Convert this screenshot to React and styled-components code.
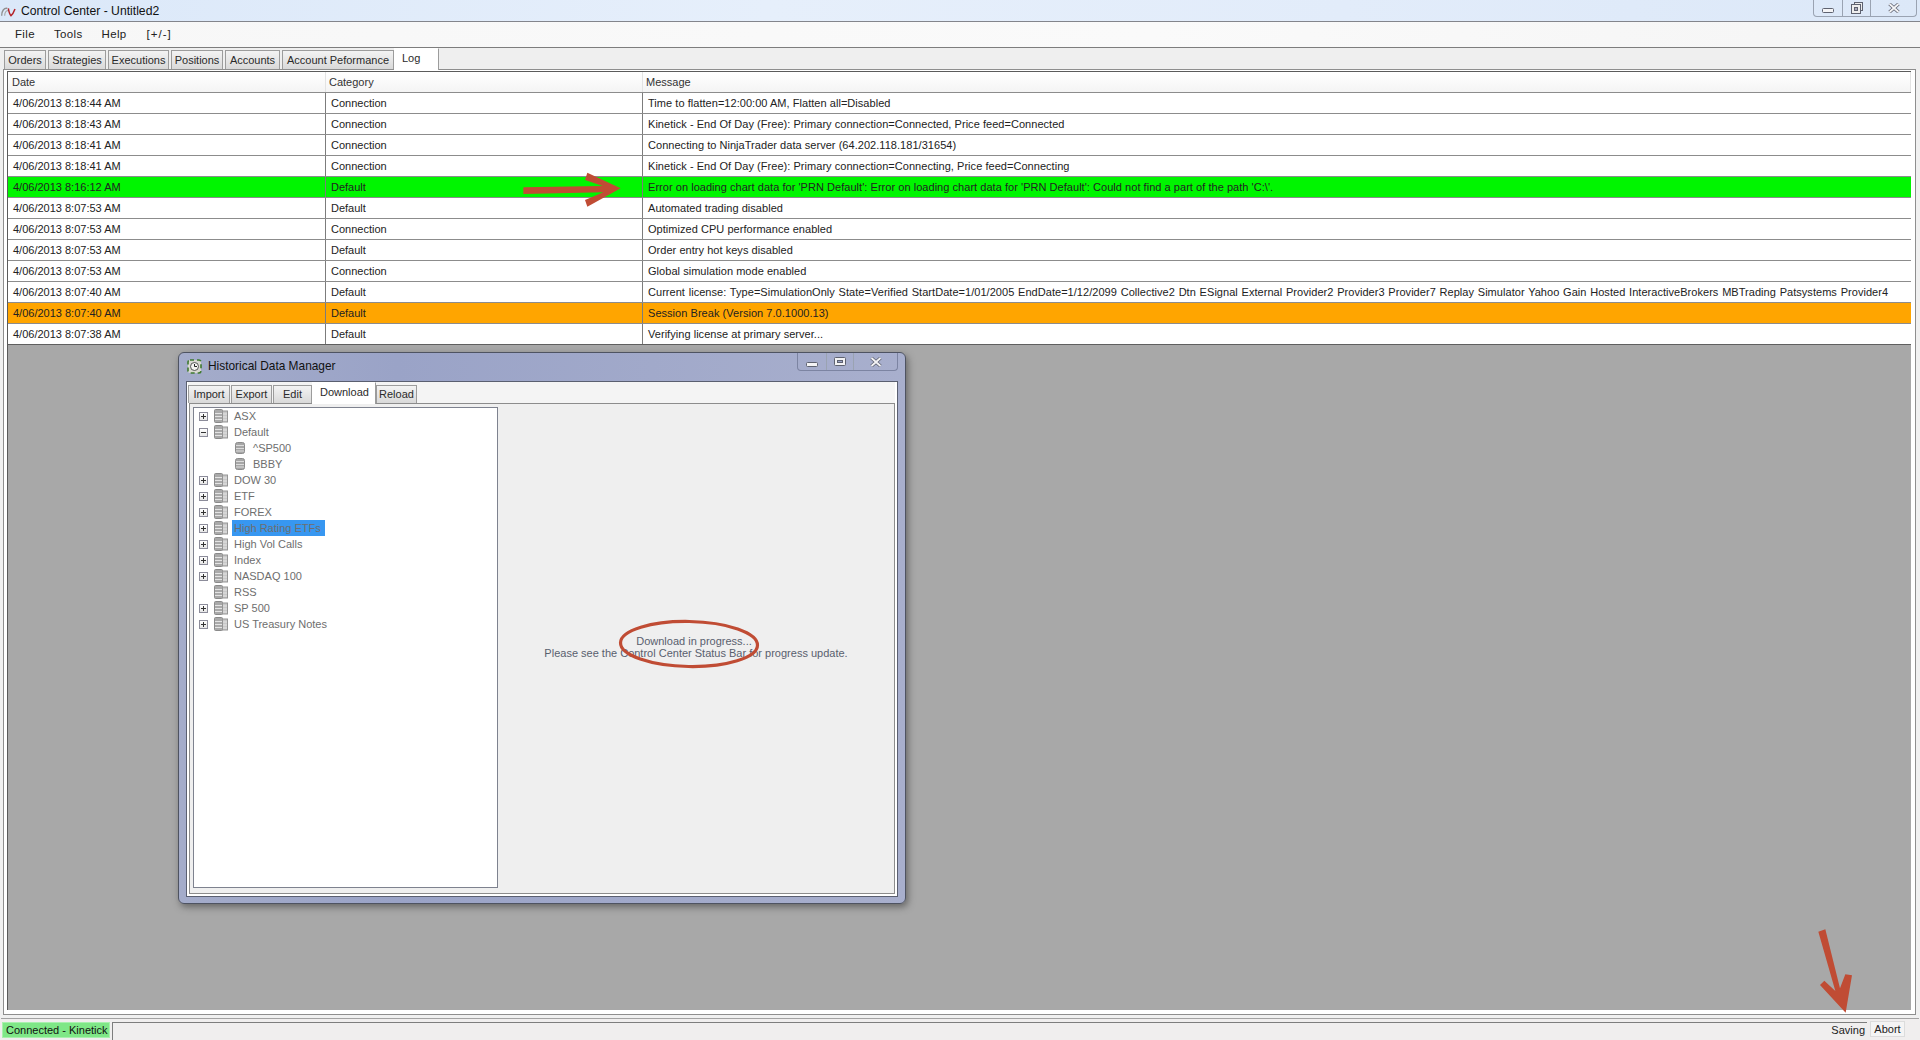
import React from "react";
import styled, { createGlobalStyle } from "styled-components";

const Global = createGlobalStyle`
  html, body { margin: 0; padding: 0; height: 100%; overflow: hidden; }
  #root { height: 100%; }
  * { box-sizing: border-box; }
  body { font-family: "Liberation Sans", Arial, sans-serif; font-size: 11px; color: #222; }
`;

const Page = styled.div`
  position: relative;
  width: 1920px;
  height: 1040px;
  display: flex;
  flex-direction: column;
  background: #f0f0f0;
  overflow: hidden;
`;

const TitleBar = styled.div`
  height: 22px;
  flex: none;
  display: flex;
  align-items: flex-start;
  background: linear-gradient(90deg, #dbe8f9 0%, #e6effb 40%, #e2ecfa 70%, #dce8f8 100%);
  border-bottom: 1px solid #83858c;
`;
const TitleIcon = styled.svg`
  width: 16px;
  height: 16px;
  margin: 1px 5px 0 0;
  flex: none;
`;
const TitleText = styled.span`
  font-size: 12.2px;
  line-height: 22px;
  color: #111;
  flex: 1;
`;
const Controls = styled.div`
  display: flex;
  height: 17px;
  margin-right: 3px;
  border: 1px solid #9aa3b2;
  border-top: none;
  border-radius: 0 0 4px 4px;
`;
const ControlBtn = styled.div`
  width: ${(p) => p.$w}px;
  display: flex;
  align-items: center;
  justify-content: center;
  padding-top: ${(p) => (p.$low ? 5 : 0)}px;
  border-left: ${(p) => (p.$first ? "none" : "1px solid #9aa3b2")};
`;

const MenuBar = styled.div`
  height: 26px;
  flex: none;
  display: flex;
  align-items: center;
  padding: 0 0 2px 15px;
  gap: 19px;
  background: linear-gradient(90deg, #f7f7f7, #fafafa 60%, #f5f5f5);
  font-size: 11.5px;
  color: #222;
  border-bottom: 1px solid #7d7d7d;
`;
const MenuItem = styled.span`
  letter-spacing: 0.35px;
`;
const MenuToggle = styled(MenuItem)`
  margin-left: 1px;
  letter-spacing: 1px;
`;

const TabStrip = styled.div`
  height: 21px;
  flex: none;
  display: flex;
  align-items: flex-end;
  padding-left: 4px;
  gap: 2px;
  background: #efefef;
`;
const Tab = styled.div`
  width: ${(p) => p.$w}px;
  height: ${(p) => (p.$active ? 22 : 19)}px;
  margin-bottom: ${(p) => (p.$active ? -1 : 0)}px;
  margin-left: ${(p) => (p.$overlap ? -p.$overlap : 0)}px;
  position: relative;
  z-index: ${(p) => (p.$active ? 2 : 0)};
  text-align: ${(p) => (p.$active ? "left" : "center")};
  padding-left: ${(p) => (p.$active ? 7 : 0)}px;
  line-height: ${(p) => (p.$active ? 19 : 18)}px;
  color: #2a2a2a;
  background: ${(p) => (p.$active ? "#fff" : "linear-gradient(#f3f3f3, #d9d9d9)")};
  border: 1px solid #9c9c9c;
  border-bottom: none;
  border-left-color: ${(p) => (p.$active ? "#fff" : "#9c9c9c")};
  border-top-color: ${(p) => (p.$active ? "#fff" : "#9c9c9c")};
`;

const PageFrame = styled.div`
  flex: 1;
  min-height: 0;
  display: flex;
  margin: 0 4px 0 3px;
  padding: 1px 4px 4px 3px;
  background: #fff;
  border: 1px solid #8e8e8e;
`;
const ContentInner = styled.div`
  flex: 1;
  display: flex;
  flex-direction: column;
  border-top: 1px solid #5a5a5a;
  border-left: 1px solid #5a5a5a;
  background: #a8a8a8;
`;

const Table = styled.div`
  display: flex;
  flex-direction: column;
  background: #fff;
  flex: none;
  border-bottom: 1px solid #5f5f5f;
`;
const HeadRow = styled.div`
  display: grid;
  grid-template-columns: 318px 317px 1fr;
  height: 20px;
  background: linear-gradient(#ffffff, #f4f4f4);
`;
const HeadCell = styled.div`
  padding-left: ${(p) => p.$pad}px;
  line-height: 20px;
  color: #333;
  border-right: 1px solid #e3e3e3;
`;
const Row = styled.div`
  display: grid;
  grid-template-columns: 318px 317px 1fr;
  height: 21px;
  border-top: 1px solid #8c8c8c;
  background: ${(p) => p.$bg || "#fff"};
`;
const Cell = styled.div`
  padding-left: ${(p) => p.$pad}px;
  line-height: 20px;
  color: #222;
  white-space: nowrap;
  overflow: hidden;
  border-right: ${(p) => (p.$last ? "none" : "1px solid #7c7c7c")};
`;
const MessageCell = styled(Cell)`
  letter-spacing: 0.04px;
  word-spacing: ${(p) => (p.$wide ? 0.65 : 0)}px;
`;
const Desk = styled.div`
  flex: 1;
  background: #a8a8a8;
`;

const OuterRule = styled.div`
  height: 4px;
  flex: none;
  margin: 0 1px;
  border-bottom: 1px solid #a2a2a2;
`;
const StatusBar = styled.div`
  height: 21px;
  flex: none;
  display: flex;
  align-items: flex-start;
  padding: 3px 0 0 2px;
  background: #f0eeee;
`;
const StatusGreen = styled.div`
  width: 108px;
  height: 16px;
  flex: none;
  padding-left: 3px;
  line-height: 14px;
  white-space: nowrap;
  background: #7fe787;
  border: 1px solid #a9f0ae;
  color: #111;
`;
const StatusTrack = styled.div`
  flex: 1;
  height: 18px;
  margin-left: 2px;
  display: flex;
  justify-content: flex-end;
  border-top: 1px solid #7d7d7d;
  border-left: 1px solid #7d7d7d;
  line-height: 15px;
  padding-right: 2px;
  color: #222;
`;
const AbortBtn = styled.div`
  width: 35px;
  height: 16px;
  flex: none;
  margin: -1px 15px 0 3px;
  text-align: center;
  line-height: 15px;
  border: 1px solid #dcdcdc;
  background: #f4f4f4;
  color: #222;
`;

const Dialog = styled.div`
  position: absolute;
  left: 178px;
  top: 352px;
  width: 728px;
  height: 552px;
  display: flex;
  flex-direction: column;
  padding: 0 7px 6px 7px;
  border-radius: 6px;
  border: 1px solid #4e5361;
  background: linear-gradient(90deg, #a4acca, #9aa3c7 30%, #a8afcd 100%);
  box-shadow: 2px 3px 7px rgba(50, 50, 50, 0.55);
`;
const DialogTitle = styled.div`
  height: 28px;
  flex: none;
  display: flex;
  align-items: flex-start;
`;
const DialogIcon = styled.svg`
  width: 15px;
  height: 15px;
  margin: 6px 6px 0 1px;
  flex: none;
`;
const DialogName = styled.span`
  flex: 1;
  font-size: 11.9px;
  line-height: 27px;
  color: #111;
`;
const DialogControls = styled.div`
  display: flex;
  height: 18px;
  border: 1px solid #7c84a2;
  border-top: none;
  border-radius: 0 0 4px 4px;
`;
const DialogBody = styled.div`
  flex: 1;
  min-height: 0;
  display: flex;
  flex-direction: column;
  background: #fff;
  border: 1px solid #5a5f70;
  padding: 0 2px 2px 2px;
`;
const DialogTabs = styled.div`
  height: 21px;
  flex: none;
  display: flex;
  align-items: flex-end;
  gap: 1px;
  margin-left: -1px;
  background: #f4f4f4;
`;
const DialogTab = styled(Tab)`
  height: ${(p) => (p.$active ? 22 : 18)}px;
  line-height: ${(p) => (p.$active ? 18 : 16)}px;
`;
const DialogMain = styled.div`
  flex: 1;
  min-height: 0;
  display: flex;
  background: #efefef;
  padding: 3px 0 5px 3px;
  border: 1px solid #8c8c8c;
`;
const Tree = styled.div`
  width: 305px;
  flex: none;
  background: #fff;
  border: 1px solid #7e828f;
`;
const TreeRow = styled.div`
  display: flex;
  align-items: center;
  height: 16px;
  padding-left: ${(p) => (p.$child ? 41 : 5)}px;
`;
const Expander = styled.div`
  width: 9px;
  height: 9px;
  flex: none;
  margin-right: 6px;
  border: 1px solid #8c8c9a;
  background: linear-gradient(#fff, #e6e6e6);
  position: relative;
  visibility: ${(p) => (p.$none ? "hidden" : "visible")};
  &::before {
    content: "";
    position: absolute;
    left: 1px;
    right: 1px;
    top: 3px;
    height: 1px;
    background: #333;
  }
  &::after {
    content: "";
    display: ${(p) => (p.$open ? "none" : "block")};
    position: absolute;
    top: 1px;
    bottom: 1px;
    left: 3px;
    width: 1px;
    background: #333;
  }
`;
const TreeLabel = styled.span`
  margin-left: 4px;
  padding: 0 3px 0 2px;
  line-height: 16px;
  color: #6e6e6e;
  background: ${(p) => (p.$sel ? "#3797f1" : "transparent")};
  width: ${(p) => (p.$sel ? "93px" : "auto")};
  white-space: nowrap;
`;
const ChildLabel = styled(TreeLabel)`
  margin-left: 6px;
`;
const DialogPanel = styled.div`
  flex: 1;
  display: flex;
  flex-direction: column;
  align-items: center;
  justify-content: center;
  padding-bottom: 1px;
  line-height: 12px;
  color: #59606e;
  text-align: center;
`;
const PanelLine = styled.div`
  transform: translateX(${(p) => p.$dx}px);
`;

const Annotation = styled.svg`
  position: absolute;
  left: ${(p) => p.$x}px;
  top: ${(p) => p.$y}px;
  width: ${(p) => p.$w}px;
  height: ${(p) => p.$h}px;
  pointer-events: none;
`;

const RED = "#c04c34";

const Logo = () => (
  <TitleIcon viewBox="0 0 48 48">
    <path d="M5 44 C5 30 12 20 22 22" fill="none" stroke="#8f8f8f" strokeWidth="4" />
    <path d="M14 44 C14 36 18 28 24 29" fill="none" stroke="#a8a8a8" strokeWidth="3.5" />
    <path d="M25 22 C27 34 30 41 33 44 C38 40 42 32 45 24" fill="none" stroke="#b4232a" strokeWidth="4.5" />
  </TitleIcon>
);

const MinGlyph = () => (
  <svg width="12" height="5" viewBox="0 0 12 5">
    <rect x="0.5" y="0.5" width="11" height="4" rx="1" fill="#f4f4f6" stroke="#5e6270" />
  </svg>
);
const RestoreGlyph = () => (
  <svg width="12" height="12" viewBox="0 0 12 12">
    <rect x="3.5" y="0.5" width="8" height="8" fill="#eee" stroke="#5e6270" />
    <rect x="0.5" y="2.5" width="9" height="9" fill="#eee" stroke="#5e6270" />
    <rect x="3.5" y="5.5" width="3" height="3" fill="#aab" stroke="#5e6270" />
  </svg>
);
const MaxGlyph = () => (
  <svg width="12" height="9" viewBox="0 0 12 9">
    <rect x="0.5" y="0.5" width="11" height="8" rx="1" fill="#f2f2f4" stroke="#5e6270" />
    <rect x="3.5" y="3.5" width="5" height="2" fill="#9aa3c7" stroke="#5e6270" />
  </svg>
);
const CloseGlyph = () => (
  <svg width="12" height="10" viewBox="0 0 12 10">
    <path d="M1.5 1 L10.5 9 M10.5 1 L1.5 9" stroke="#5e6270" strokeWidth="3.4" />
    <path d="M1.5 1 L10.5 9 M10.5 1 L1.5 9" stroke="#f4f4f6" strokeWidth="1.8" />
  </svg>
);

const DbIcon = () => (
  <svg width="14" height="14" viewBox="0 0 14 14" style={{ flex: "none" }}>
    <rect x="0.5" y="0.5" width="8" height="13" rx="1" fill="#a9a9a9" stroke="#8a8a8a" />
    <rect x="8.5" y="2" width="5" height="11" fill="#c8c8c8" stroke="#959595" />
    <path d="M1 4.5H8M1 7.5H8M1 10.5H8M9 5H13M9 8H13M9 11H13" stroke="#e4e4e4" strokeWidth="1" />
  </svg>
);
const CylIcon = () => (
  <svg width="10" height="12" viewBox="0 0 10 12" style={{ flex: "none" }}>
    <rect x="0.5" y="0.5" width="9" height="11" rx="2" fill="#a6a6a6" stroke="#8c8c8c" />
    <path d="M1 3.5H9M1 6.5H9M1 9H9" stroke="#dcdcdc" strokeWidth="1" />
  </svg>
);

const rows = [
  ["4/06/2013 8:18:44 AM", "Connection", "Time to flatten=12:00:00 AM, Flatten all=Disabled"],
  ["4/06/2013 8:18:43 AM", "Connection", "Kinetick - End Of Day (Free): Primary connection=Connected, Price feed=Connected"],
  ["4/06/2013 8:18:41 AM", "Connection", "Connecting to NinjaTrader data server (64.202.118.181/31654)"],
  ["4/06/2013 8:18:41 AM", "Connection", "Kinetick - End Of Day (Free): Primary connection=Connecting, Price feed=Connecting"],
  ["4/06/2013 8:16:12 AM", "Default", "Error on loading chart data for 'PRN Default': Error on loading chart data for 'PRN Default': Could not find a part of the path 'C:\\'.", "#00f500"],
  ["4/06/2013 8:07:53 AM", "Default", "Automated trading disabled"],
  ["4/06/2013 8:07:53 AM", "Connection", "Optimized CPU performance enabled"],
  ["4/06/2013 8:07:53 AM", "Default", "Order entry hot keys disabled"],
  ["4/06/2013 8:07:53 AM", "Connection", "Global simulation mode enabled"],
  ["4/06/2013 8:07:40 AM", "Default", "Current license: Type=SimulationOnly State=Verified StartDate=1/01/2005 EndDate=1/12/2099 Collective2 Dtn ESignal External Provider2 Provider3 Provider7 Replay Simulator Yahoo Gain Hosted InteractiveBrokers MBTrading Patsystems Provider4"],
  ["4/06/2013 8:07:40 AM", "Default", "Session Break (Version 7.0.1000.13)", "#ffa500"],
  ["4/06/2013 8:07:38 AM", "Default", "Verifying license at primary server..."],
];

const tabs = [
  ["Orders", 42], ["Strategies", 58], ["Executions", 61], ["Positions", 52],
  ["Accounts", 55], ["Account Peformance", 112],
];
const dlgTabs = [["Import", 42], ["Export", 41], ["Edit", 39]];

const tree = [
  { t: "ASX" },
  { t: "Default", open: true },
  { t: "^SP500", child: true },
  { t: "BBBY", child: true },
  { t: "DOW 30" },
  { t: "ETF" },
  { t: "FOREX" },
  { t: "High Rating ETFs", sel: true },
  { t: "High Vol Calls" },
  { t: "Index" },
  { t: "NASDAQ 100" },
  { t: "RSS", none: true },
  { t: "SP 500" },
  { t: "US Treasury Notes" },
];

export default function App() {
  return (
    <Page>
      <Global />
      <TitleBar>
        <Logo />
        <TitleText>Control Center - Untitled2</TitleText>
        <Controls>
          <ControlBtn $w={28} $first $low><MinGlyph /></ControlBtn>
          <ControlBtn $w={28}><RestoreGlyph /></ControlBtn>
          <ControlBtn $w={46}><CloseGlyph /></ControlBtn>
        </Controls>
      </TitleBar>
      <MenuBar>
        <MenuItem>File</MenuItem>
        <MenuItem>Tools</MenuItem>
        <MenuItem>Help</MenuItem>
        <MenuToggle>[+/-]</MenuToggle>
      </MenuBar>
      <TabStrip>
        {tabs.map(([t, w]) => <Tab key={t} $w={w}>{t}</Tab>)}
        <Tab $w={45} $active $overlap={2}>Log</Tab>
      </TabStrip>
      <PageFrame>
        <ContentInner>
          <Table>
            <HeadRow>
              <HeadCell $pad={4}>Date</HeadCell>
              <HeadCell $pad={3}>Category</HeadCell>
              <HeadCell $pad={3}>Message</HeadCell>
            </HeadRow>
            {rows.map(([d, c, m, bg], i) => (
              <Row key={i} $bg={bg}>
                <Cell $pad={5}>{d}</Cell>
                <Cell $pad={5}>{c}</Cell>
                <MessageCell $pad={5} $last $wide={m.length > 200}>{m}</MessageCell>
              </Row>
            ))}
          </Table>
          <Desk />
        </ContentInner>
      </PageFrame>
      <OuterRule />
      <StatusBar>
        <StatusGreen>Connected - Kinetick</StatusGreen>
        <StatusTrack>Saving</StatusTrack>
        <AbortBtn>Abort</AbortBtn>
      </StatusBar>

      <Dialog>
        <DialogTitle>
          <DialogIcon viewBox="0 0 15 15">
            <rect x="1" y="1" width="13" height="13" rx="2" fill="#d8d8d0" stroke="#3f7a2f" strokeWidth="1.6" strokeDasharray="4 3" />
            <circle cx="7.5" cy="7.5" r="4" fill="#f4f4f0" stroke="#555" />
            <path d="M7.5 5V7.5H10" stroke="#222" fill="none" />
          </DialogIcon>
          <DialogName>Historical Data Manager</DialogName>
          <DialogControls>
            <ControlBtn $w={28} $first $low><MinGlyph /></ControlBtn>
            <ControlBtn $w={27}><MaxGlyph /></ControlBtn>
            <ControlBtn $w={44}><CloseGlyph /></ControlBtn>
          </DialogControls>
        </DialogTitle>
        <DialogBody>
          <DialogTabs>
            {dlgTabs.map(([t, w]) => <DialogTab key={t} $w={w}>{t}</DialogTab>)}
            <DialogTab $w={64} $active $overlap={1}>Download</DialogTab>
            <DialogTab $w={41} $overlap={1}>Reload</DialogTab>
          </DialogTabs>
          <DialogMain>
            <Tree>
              {tree.map((n) => n.child ? (
                <TreeRow key={n.t} $child>
                  <CylIcon />
                  <ChildLabel>{n.t}</ChildLabel>
                </TreeRow>
              ) : (
                <TreeRow key={n.t}>
                  <Expander $open={n.open} $none={n.none} />
                  <DbIcon />
                  <TreeLabel $sel={n.sel}>{n.t}</TreeLabel>
                </TreeRow>
              ))}
            </Tree>
            <DialogPanel>
              <PanelLine $dx={-2}>Download in progress...</PanelLine>
              <PanelLine $dx={0}>Please see the Control Center Status Bar for progress update.</PanelLine>
            </DialogPanel>
          </DialogMain>
        </DialogBody>
      </Dialog>

      <Annotation $x={500} $y={160} $w={130} $h={60} viewBox="0 0 390 180">
        <path d="M70 82 L308 78 L255 60 L262 38 L362 85 L262 140 L255 120 L310 97 L70 102 Z" fill={RED} />
      </Annotation>
      <Annotation $x={610} $y={610} $w={160} $h={70} viewBox="0 0 160 70">
        <ellipse cx="79" cy="34" rx="68.5" ry="22.5" fill="none" stroke={RED} strokeWidth="3.2" transform="rotate(1 79 34)" />
      </Annotation>
      <Annotation $x={1760} $y={920} $w={160} $h={120} viewBox="0 0 480 360">
        <path d="M175 35 L196 28 L240 205 L256 163 L276 166 L257 278 L180 195 L193 182 L226 213 Z" fill={RED} />
      </Annotation>
    </Page>
  );
}
